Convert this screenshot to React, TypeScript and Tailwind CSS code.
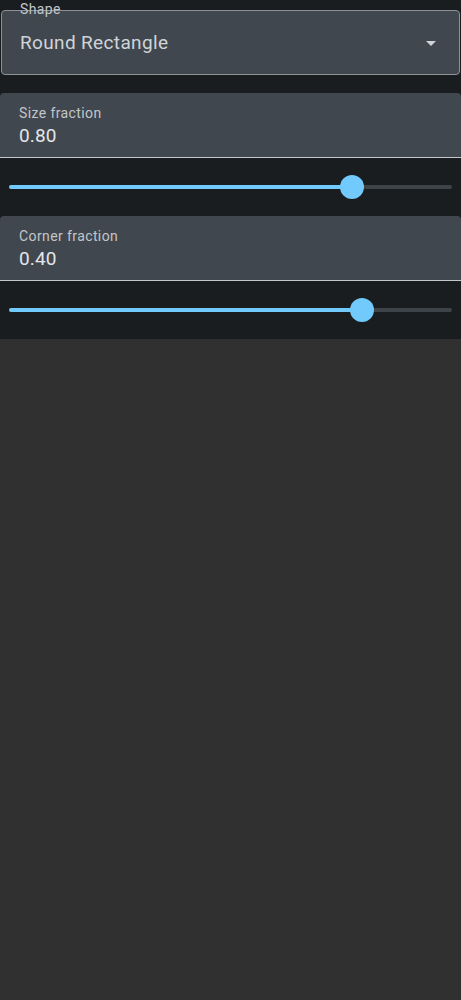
import React from 'react';

type SliderProps = {
  value: number;
};

function Slider({ value }: SliderProps) {
  const pct = `${value * 100}%`;
  return (
    <div className="flex h-[58px] items-center px-[9px]">
      <div className="relative h-[4px] w-full rounded-full bg-[#3e4348]">
        <div className="h-full rounded-full bg-[#72c9fc]" style={{ width: pct }} />
        <div
          className="absolute top-1/2 h-[24px] w-[24px] -translate-x-1/2 -translate-y-1/2 rounded-full bg-[#72c9fc]"
          style={{ left: pct }}
        />
      </div>
    </div>
  );
}

function FilledField({ label, value }: { label: string; value: string }) {
  return (
    <div className="flex h-[65px] flex-col rounded-t-[4px] border-b border-[#c4c8cc] bg-[#41474e] px-[19px] pt-[11px]">
      <div className="text-[14px] leading-[19px] tracking-[0.4px] text-[#c2c6ca]">{label}</div>
      <div className="mt-[1px] text-[19px] leading-[24px] tracking-[0.15px] text-[#e3e6e9]">{value}</div>
    </div>
  );
}

export default function App() {
  return (
    <div className="min-h-[1000px] bg-[#303030] font-['Roboto',sans-serif]">
      <div className="flex flex-col bg-[#1a1d20] pt-[10px]">
        <div className="relative mx-[1px] flex h-[65px] items-center justify-between rounded-[4px] border border-[#8d9196] bg-[#41474e] pl-[18px] pr-[23px]">
          <span className="absolute left-[18px] top-[-10px] text-[14px] leading-[17px] tracking-[0.4px] text-[#c2c6ca]">Shape</span>
          <span className="pt-[1px] text-[19px] tracking-[0.35px] text-[#d0d4d8]">Round Rectangle</span>
          <svg width="10" height="5" viewBox="0 0 10 5" className="mt-[1px]">
            <path d="M0 0 L10 0 L5 5 Z" fill="#d0d4d8" />
          </svg>
        </div>
        <div className="mt-[18px]">
          <FilledField label="Size fraction" value="0.80" />
          <Slider value={0.775} />
        </div>
        <div>
          <FilledField label="Corner fraction" value="0.40" />
          <Slider value={0.797} />
        </div>
      </div>
    </div>
  );
}
